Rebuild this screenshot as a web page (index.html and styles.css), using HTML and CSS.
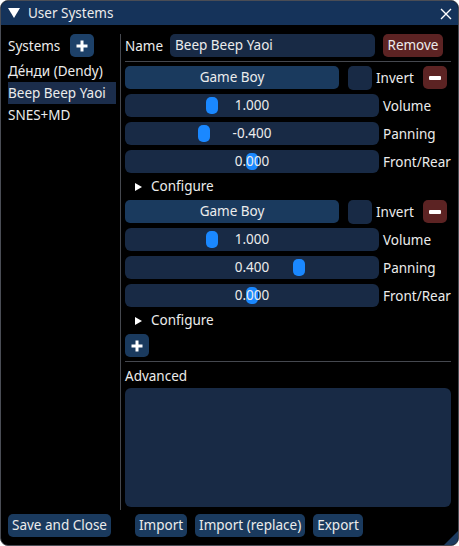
FILE: index.html
```html
<!DOCTYPE html>
<html lang="en">
<head>
    <meta charset="UTF-8">
    <title>User Systems</title>
    <link rel="stylesheet" href="styles.css">
</head>
<body>
    <div class="window">
        <div class="titlebar">
            <svg class="collapse" width="12" height="10" viewBox="0 0 12 10"><polygon points="0,0 12,0 6,10" fill="#fff"/></svg>
            <span class="title">User Systems</span>
            <svg class="close" width="12" height="12" viewBox="0 0 12 12"><path d="M1 1 L11 11 M11 1 L1 11" stroke="#fff" stroke-width="1.4"/></svg>
        </div>

        <div class="body">
            <div class="columns">
                <div class="sys-list">
                    <div class="list-head">
                        <span>Systems</span>
                        <button class="btn icon-btn"><svg width="12" height="12" viewBox="0 0 12 12"><path d="M6 0.5 V11.5 M0.5 6 H11.5" stroke="#fff" stroke-width="3"/></svg></button>
                    </div>
                    <div class="sys-item">Де́нди (Dendy)</div>
                    <div class="sys-item selected">Beep Beep Yaoi</div>
                    <div class="sys-item">SNES+MD</div>
                </div>

                <div class="sys-editor">
                    <div class="name-row">
                        <span class="name-label">Name</span>
                        <div class="input">Beep Beep Yaoi</div>
                        <button class="btn danger">Remove</button>
                    </div>
                    <div class="sep"></div>

                    <!-- chip 1 -->
                    <div class="chip-row">
                        <button class="btn chip-btn">Game Boy</button>
                        <div class="checkbox"></div>
                        <span class="invert">Invert</span>
                        <button class="btn danger icon-btn"><svg width="12" height="4" viewBox="0 0 12 4"><rect width="12" height="4" rx="1" fill="#fff"/></svg></button>
                    </div>
                    <div class="slider-row">
                        <div class="slider"><div class="grab" style="left: 81px"></div><span class="val">1.000</span></div>
                        <span class="slider-label">Volume</span>
                    </div>
                    <div class="slider-row">
                        <div class="slider"><div class="grab" style="left: 73px"></div><span class="val">-0.400</span></div>
                        <span class="slider-label">Panning</span>
                    </div>
                    <div class="slider-row">
                        <div class="slider"><div class="grab" style="left: 121px"></div><span class="val">0.000</span></div>
                        <span class="slider-label">Front/Rear</span>
                    </div>
                    <div class="tree-node"><span class="arrow"></span>Configure</div>

                    <!-- chip 2 -->
                    <div class="chip-row">
                        <button class="btn chip-btn">Game Boy</button>
                        <div class="checkbox"></div>
                        <span class="invert">Invert</span>
                        <button class="btn danger icon-btn"><svg width="12" height="4" viewBox="0 0 12 4"><rect width="12" height="4" rx="1" fill="#fff"/></svg></button>
                    </div>
                    <div class="slider-row">
                        <div class="slider"><div class="grab" style="left: 81px"></div><span class="val">1.000</span></div>
                        <span class="slider-label">Volume</span>
                    </div>
                    <div class="slider-row">
                        <div class="slider"><div class="grab" style="left: 168px"></div><span class="val">0.400</span></div>
                        <span class="slider-label">Panning</span>
                    </div>
                    <div class="slider-row">
                        <div class="slider"><div class="grab" style="left: 121px"></div><span class="val">0.000</span></div>
                        <span class="slider-label">Front/Rear</span>
                    </div>
                    <div class="tree-node"><span class="arrow"></span>Configure</div>

                    <div class="add-row">
                        <button class="btn icon-btn"><svg width="12" height="12" viewBox="0 0 12 12"><path d="M6 0.5 V11.5 M0.5 6 H11.5" stroke="#fff" stroke-width="3"/></svg></button>
                    </div>
                    <div class="sep"></div>

                    <div class="adv-label">Advanced</div>
                    <div class="textarea"></div>
                </div>
            </div>

            <div class="footer">
                <button class="btn">Save and Close</button>
                <button class="btn import">Import</button>
                <button class="btn">Import (replace)</button>
                <button class="btn">Export</button>
            </div>
        </div>
        <div class="grip"></div>
    </div>
</body>
</html>
```

FILE: styles.css
```css
body {
    margin: 0;
    background: #fff;
    font-family: "Noto Sans", sans-serif;
    font-size: 13.5px;
    color: #ececec;
}

.window {
    position: relative;
    box-sizing: border-box;
    width: 459px;
    height: 546px;
    background: #000;
    border: 1px solid #4a4d55;
    border-radius: 8px;
    overflow: hidden;
    display: flex;
    flex-direction: column;
}

.titlebar {
    height: 24px;
    background: #15335a;
    display: flex;
    align-items: center;
    padding: 0 6px 0 7px;
}

.collapse {
    margin-right: 8px;
}

.title {
    flex: 1;
}

.close {
    margin-top: 1px;
}

.body {
    flex: 1;
    display: flex;
    flex-direction: column;
    padding: 9px 7px 8px 7px;
    min-height: 0;
}

.columns {
    flex: 1;
    display: flex;
    min-height: 0;
}

.btn {
    font: inherit;
    color: #ececec;
    background: #1a3a5e;
    border: none;
    border-radius: 5px;
    height: 23px;
    padding: 0 4px;
    line-height: 23px;
}

.btn.danger {
    background: #5c2323;
}

.icon-btn {
    width: 24px;
    padding: 0;
    display: flex;
    align-items: center;
    justify-content: center;
}

/* left column */
.sys-list {
    width: 112px;
    border-right: 1px solid #45484f;
}

.list-head {
    height: 23px;
    display: flex;
    align-items: center;
    gap: 10px;
    margin-bottom: 3px;
}

.list-head .icon-btn {
    background: #1d4169;
}

.sys-item {
    width: 108px;
    height: 22px;
    line-height: 22px;
    white-space: nowrap;
}

.sys-item.selected {
    background: #1b2d4b;
}

/* right column */
.sys-editor {
    flex: 1;
    display: flex;
    flex-direction: column;
    gap: 5px;
    padding: 0 0 3px 4px;
    min-width: 0;
}

.name-row {
    display: flex;
    align-items: center;
    height: 23px;
}

.name-label {
    width: 45px;
}

.input {
    width: 200px;
    height: 23px;
    line-height: 23px;
    padding-left: 5px;
    background: #182a45;
    border-radius: 5px;
    margin-right: 8px;
}

.name-row .danger {
    width: 60px;
    padding: 0;
}

.sep {
    height: 1px;
    background: #45484f;
    margin: -1px 0;
}

.chip-row {
    display: flex;
    align-items: center;
    height: 23px;
}

.chip-btn {
    width: 214px;
    margin-right: 9px;
}

.checkbox {
    width: 24px;
    height: 24px;
    border-radius: 5px;
    background: #182a45;
    margin-right: 4px;
}

.invert {
    width: 47px;
}

.slider-row {
    display: flex;
    align-items: center;
    height: 23px;
}

.slider {
    position: relative;
    width: 254px;
    height: 23px;
    background: #182a45;
    border-radius: 6px;
    margin-right: 4px;
    text-align: center;
    line-height: 23px;
}

.grab {
    position: absolute;
    top: 3px;
    width: 12px;
    height: 17px;
    border-radius: 5px;
    background: #1a88ff;
}

.val {
    position: relative;
}

.tree-node {
    height: 17px;
    line-height: 17px;
    display: flex;
    align-items: center;
    padding-left: 10px;
}

.arrow {
    width: 0;
    height: 0;
    border-top: 4.5px solid transparent;
    border-bottom: 4.5px solid transparent;
    border-left: 7px solid #fff;
    margin-right: 9px;
}

.add-row {
    height: 23px;
}

.adv-label {
    height: 17px;
    line-height: 17px;
    margin: 2px 0 -2px;
}

.textarea {
    flex: 1;
    background: #182a45;
    border-radius: 6px;
}

.footer {
    display: flex;
    gap: 8px;
    margin-top: 4px;
}

.footer .import {
    margin-left: 16px;
}

.grip {
    position: absolute;
    right: 0;
    bottom: 0;
    width: 14px;
    height: 14px;
    background: #1d3a5e;
    clip-path: polygon(100% 0, 100% 100%, 0 100%);
}
```
